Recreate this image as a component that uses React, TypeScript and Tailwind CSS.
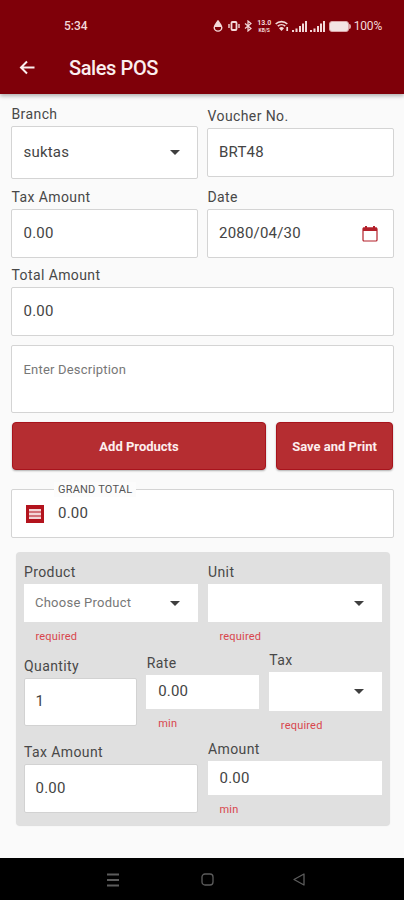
import type { ReactNode } from "react"
import clsx from "clsx"

interface FieldProps {
  label: string
  value?: string
  placeholder?: string
  error?: string
  select?: boolean
  icon?: ReactNode
  boxClass: string
}

const outlined = "rounded-[2px] border border-[#d4d4d4]"

function Caret() {
  return (
    <svg width="10" height="5" viewBox="0 0 10 5" className="mr-[6px]">
      <path d="M0 0h10L5 5z" fill="#3f3f3f" />
    </svg>
  )
}

function Field({ label, value, placeholder, error, select, icon, boxClass }: FieldProps) {
  return (
    <div className="min-w-0 flex-1">
      <div className="h-[22px] pl-[0.5px] text-[14px] leading-[21px] tracking-[0.4px] text-[#484848]">
        {label}
      </div>
      <div className={clsx("flex items-center justify-between bg-white pr-[11px]", boxClass)}>
        {value && <span className="text-[15px] tracking-[0.2px] text-[#444]">{value}</span>}
        {placeholder && (
          <span className="text-[13px] tracking-[0.25px] text-[#777]">{placeholder}</span>
        )}
        {!value && !placeholder && <span />}
        {select && <Caret />}
        {icon}
      </div>
      {error && (
        <div className="h-5 pt-[9px] pl-[12px] text-[11px] leading-3 tracking-[0.2px] text-[#d8464d]">
          {error}
        </div>
      )}
    </div>
  )
}

function CalendarIcon() {
  return (
    <svg width="16" height="16" viewBox="0 0 16 16" className="mr-[4px]">
      <rect x="1" y="2" width="14" height="13" rx="1" fill="none" stroke="#b3202a" strokeWidth="1.2" />
      <path d="M1 1.500h14v3.500H1zM3 0h2v2H3zM11 0h2v2h-2z" fill="#b3202a" />
    </svg>
  )
}

function Signal() {
  return (
    <svg width="15" height="11" viewBox="0 0 15 11" fill="#f3d9da">
      <path d="M0 9h2v2H0zM3.5 7.5h2V11h-2zM7 5h2v6H7zM10 2.5h2V11h-2zM13 0h2v11h-2z" />
    </svg>
  )
}

function StatusBar() {
  return (
    <div className="flex h-[20px] items-center pr-[22px] pl-[64px] text-[#f3d9da]">
      <span className="text-[12px] font-medium">5:34</span>
      <div className="ml-auto flex items-center">
        <svg width="10" height="12" viewBox="0 0 10 12">
          <path d="M5 1C3 4 1.200 5.200 1.200 7.500a3.800 3.600 0 0 0 7.600 0C8.800 5.200 7 4 5 1z" fill="none" stroke="currentColor" strokeWidth="1.400" />
          <path d="M5 1L2 5v2h6V5z" fill="currentColor" />
        </svg>
        <svg width="12" height="12" viewBox="0 0 12 12" fill="none" stroke="currentColor" className="ml-[5px]">
          <rect x="3.500" y="2" width="5" height="8" rx="1" strokeWidth="1.800" />
          <path d="M1 4v4M11 4v4" strokeWidth="1.400" />
        </svg>
        <svg width="8" height="12" viewBox="0 0 8 12" fill="none" stroke="currentColor" strokeWidth="1.200" className="ml-[4px]">
          <path d="M1 3.500l6 5L4 11V1l3 2.500-6 5" />
        </svg>
        <div className="ml-[5px] flex w-[15px] flex-col items-center font-bold">
          <span className="text-[7px] leading-[8px]">13.0</span>
          <span className="text-[5px] leading-[6px]">KB/S</span>
        </div>
        <svg width="14" height="12" viewBox="0 0 14 12" fill="none" stroke="currentColor" strokeWidth="1.700" className="ml-[3px]">
          <path d="M.7 4a8.500 8.500 0 0 1 11.600 0M2.800 6.200a5.400 5.400 0 0 1 7.400 0" />
          <path d="M6.500 11L4 8.200a3.600 3.600 0 0 1 5 0z" fill="currentColor" stroke="none" />
          <path d="M12.200 7v4" />
        </svg>
        <div className="ml-[3px] flex gap-[3px]">
          <Signal />
          <Signal />
        </div>
        <div className="ml-[4px] h-[11px] w-[20px] rounded-[3px] border border-[#dba5a8] bg-[#f3e4e4]" />
        <div className="h-[5px] w-[2px] rounded-r bg-[#dba5a8]" />
        <span className="ml-[3px] text-[12px] tracking-[-0.2px]">100%</span>
      </div>
    </div>
  )
}

function Header() {
  return (
    <header className="z-10 h-[94px] bg-[#7f0009] pt-[16px] shadow-[0_2px_4px_rgba(0,0,0,0.3)]">
      <StatusBar />
      <div className="mt-[16px] flex h-8 items-center pl-[19px]">
        <svg width="16" height="16" viewBox="0 0 16 16" fill="none" stroke="#fbeeee" strokeWidth="2">
          <path d="M15.500 7.500H2M8 1.500l-6 6 6 6" />
        </svg>
        <h1 className="ml-[34px] text-[20px] font-medium tracking-[-0.4px] text-[#fbeeee]">Sales POS</h1>
      </div>
    </header>
  )
}

function ProductCard() {
  return (
    <section className="mr-1 ml-[5px] mt-[14px] h-[273px] rounded-[4px] bg-[#e0e0e0] pt-[10px] pr-2 pl-[7.5px] shadow-[0_1px_1px_rgba(0,0,0,0.12)]">
      <div className="flex gap-[9.5px]">
        <Field label="Product" placeholder="Choose Product" select error="required" boxClass="h-[38px] pl-[11.5px] pr-[12px]" />
        <Field label="Unit" select error="required" boxClass="h-[38px] pr-[12px]" />
      </div>
      <div className="mt-2 flex items-center gap-[9.5px]">
        <Field label="Quantity" value="1" boxClass="h-[48px] pl-[11px] rounded-[2px] border border-[#d2d2d2]" />
        <Field label="Rate" value="0.00" error="min" boxClass="h-[34px] pl-[12px]" />
        <Field label="Tax" select error="required" boxClass="h-[39px] pr-[12px]" />
      </div>
      <div className="mt-2 flex items-center gap-[9.5px]">
        <Field label="Tax Amount" value="0.00" boxClass="h-[49px] pl-[11px] rounded-[2px] border border-[#d2d2d2]" />
        <Field label="Amount" value="0.00" error="min" boxClass="h-[34px] pl-[12px]" />
      </div>
    </section>
  )
}

function NavBar() {
  return (
    <nav className="flex h-[42px] items-center bg-black pt-px pl-[107px] text-[#5c5c5c]">
      <svg width="12" height="14" viewBox="0 0 12 14" stroke="currentColor" strokeWidth="1.800">
        <path d="M0 1.500h12M0 7h12M0 12.500h12" />
      </svg>
      <svg width="13" height="13" viewBox="0 0 13 13" fill="none" stroke="currentColor" strokeWidth="1.300" className="ml-[82px]">
        <rect x="1" y="1" width="11" height="11" rx="3" />
      </svg>
      <svg width="12" height="13" viewBox="0 0 12 13" fill="none" stroke="currentColor" strokeWidth="1.300" className="ml-[79px]">
        <path d="M11 1v11L1 6.500z" strokeLinejoin="round" />
      </svg>
    </nav>
  )
}

export default function App() {
  return (
    <div className="flex h-[900px] w-[404px] flex-col overflow-hidden bg-[#fafafa] font-['Roboto',sans-serif]">
      <Header />
      <main className="flex-1 pt-[10px] pr-[10px] pl-[11px]">
        <div className="flex items-center gap-[9px]">
          <Field label="Branch" value="suktas" select boxClass={clsx("h-[53px] pl-[11.5px]", outlined)} />
          <Field label="Voucher No." value="BRT48" boxClass={clsx("h-[49px] pl-[11px]", outlined)} />
        </div>
        <div className="mt-2 flex gap-[9px]">
          <Field label="Tax Amount" value="0.00" boxClass={clsx("h-[49px] pl-[11.5px]", outlined)} />
          <Field label="Date" value="2080/04/30" icon={<CalendarIcon />} boxClass={clsx("h-[49px] pl-[11px]", outlined)} />
        </div>
        <div className="mt-[7px]">
          <Field label="Total Amount" value="0.00" boxClass={clsx("h-[49px] pl-[11.5px]", outlined)} />
        </div>
        <div className={clsx("mt-[9px] h-[68px] bg-white pt-[14px] pl-[11.5px] text-[13px] tracking-[0.2px] text-[#777]", outlined)}>
          Enter Description
        </div>

        <div className="mt-[9px] flex gap-[10px] pl-px text-[13px] font-bold text-[#fdeeee]">
          <button className="h-12 w-[254px] rounded-[4px] border border-[#a8131c] bg-[#b52d31] pt-px shadow-[0_1px_2px_rgba(0,0,0,0.3)]">
            Add Products
          </button>
          <button className="h-12 w-[117px] rounded-[4px] border border-[#a8131c] bg-[#b52d31] pt-px shadow-[0_1px_2px_rgba(0,0,0,0.3)]">
            Save and Print
          </button>
        </div>

        <div className={clsx("relative mt-[19px] flex h-[49px] items-center bg-white pl-[14px]", outlined)}>
          <span className="absolute -top-[8px] left-[42px] bg-[#fcfcfc] px-1 text-[11px] leading-[15px] tracking-[0.2px] text-[#555]">
            GRAND TOTAL
          </span>
          <svg width="18" height="18" viewBox="0 0 18 18">
            <path d="M0 0h18v18H0z" fill="#b3131d" />
            <path d="M3 4h12v10H3z" fill="#f3d5d6" />
            <path d="M3 7h12M3 11h12" stroke="#b3131d" strokeWidth="1.200" />
          </svg>
          <span className="ml-[14px] text-[15px] tracking-[0.2px] text-[#444]">0.00</span>
        </div>

        <ProductCard />
      </main>
      <NavBar />
    </div>
  )
}
